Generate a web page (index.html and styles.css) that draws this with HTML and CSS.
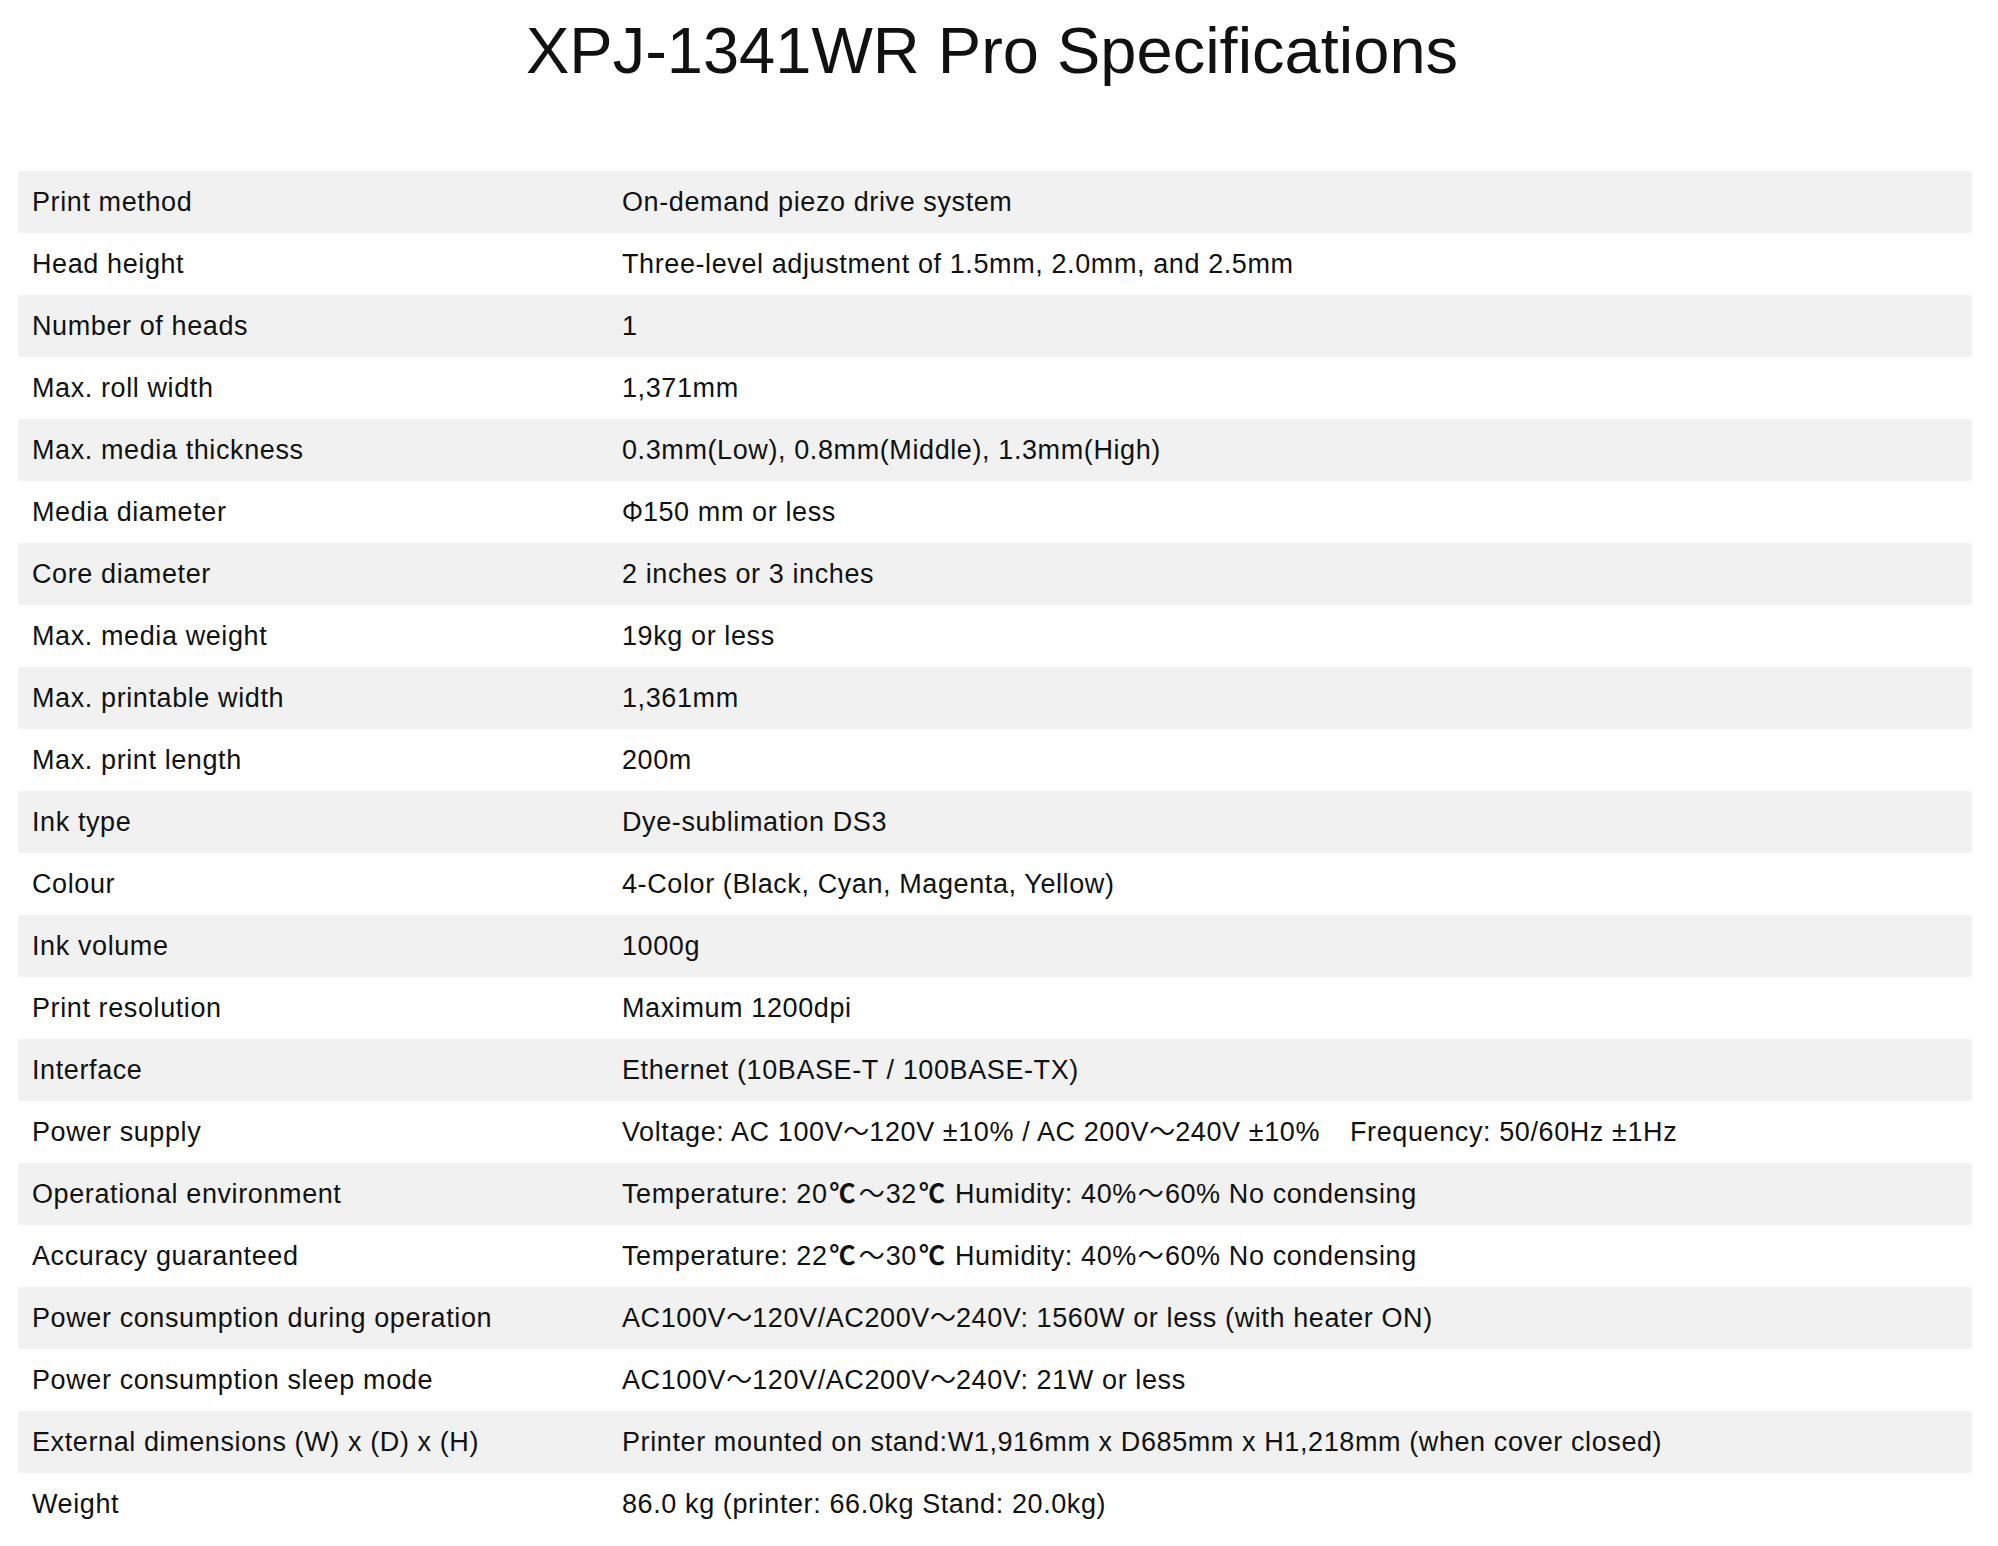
FILE: index.html
```html
<!DOCTYPE html>
<html lang="en">
<head>
<meta charset="utf-8">
<title>XPJ-1341WR Pro Specifications</title>
<link rel="stylesheet" href="styles.css">
</head>
<body>
<div class="page">
  <h1 class="title">XPJ-1341WR Pro Specifications</h1>
  <table class="spec">
    <tbody>
      <tr><td class="k">Print method</td><td class="v">On-demand piezo drive system</td></tr>
      <tr><td class="k">Head height</td><td class="v">Three-level adjustment of 1.5mm, 2.0mm, and 2.5mm</td></tr>
      <tr><td class="k">Number of heads</td><td class="v">1</td></tr>
      <tr><td class="k">Max. roll width</td><td class="v">1,371mm</td></tr>
      <tr><td class="k">Max. media thickness</td><td class="v">0.3mm(Low), 0.8mm(Middle), 1.3mm(High)</td></tr>
      <tr><td class="k">Media diameter</td><td class="v"><span class="cjk">Φ</span>150 mm or less</td></tr>
      <tr><td class="k">Core diameter</td><td class="v">2 inches or 3 inches</td></tr>
      <tr><td class="k">Max. media weight</td><td class="v">19kg or less</td></tr>
      <tr><td class="k">Max. printable width</td><td class="v">1,361mm</td></tr>
      <tr><td class="k">Max. print length</td><td class="v">200m</td></tr>
      <tr><td class="k">Ink type</td><td class="v">Dye-sublimation DS3</td></tr>
      <tr><td class="k">Colour</td><td class="v">4-Color (Black, Cyan, Magenta, Yellow)</td></tr>
      <tr><td class="k">Ink volume</td><td class="v">1000g</td></tr>
      <tr><td class="k">Print resolution</td><td class="v">Maximum 1200dpi</td></tr>
      <tr><td class="k">Interface</td><td class="v">Ethernet (10BASE-T / 100BASE-TX)</td></tr>
      <tr><td class="k">Power supply</td><td class="v">Voltage: AC 100V<span class="cjk">～</span>120V ±10% / AC 200V<span class="cjk">～</span>240V ±10%<span class="gap"></span>Frequency: 50/60Hz ±1Hz</td></tr>
      <tr><td class="k">Operational environment</td><td class="v">Temperature: 20<span class="cjk deg">℃</span><span class="cjk tl">～</span>32<span class="cjk deg">℃</span> Humidity: 40%<span class="cjk tl">～</span>60% No condensing</td></tr>
      <tr><td class="k">Accuracy guaranteed</td><td class="v">Temperature: 22<span class="cjk deg">℃</span><span class="cjk tl">～</span>30<span class="cjk deg">℃</span> Humidity: 40%<span class="cjk tl">～</span>60% No condensing</td></tr>
      <tr><td class="k">Power consumption during operation</td><td class="v">AC100V<span class="cjk">～</span>120V/AC200V<span class="cjk">～</span>240V: 1560W or less (with heater ON)</td></tr>
      <tr><td class="k">Power consumption sleep mode</td><td class="v">AC100V<span class="cjk">～</span>120V/AC200V<span class="cjk">～</span>240V: 21W or less</td></tr>
      <tr><td class="k">External dimensions (W) x (D) x (H)</td><td class="v">Printer mounted on stand:W1,916mm x D685mm x H1,218mm (when cover closed)</td></tr>
      <tr><td class="k">Weight</td><td class="v">86.0 kg (printer: 66.0kg Stand: 20.0kg)</td></tr>
    </tbody>
  </table>
</div>
</body>
</html>
```
FILE: styles.css
```css
html, body {
  margin: 0;
  padding: 0;
  background: #ffffff;
}

body {
  font-family: "Liberation Sans", Arial, "Noto Sans CJK JP", sans-serif;
  color: #111111;
}

.page {
  width: 1984px;
  padding-bottom: 11px;
}

.title {
  margin: 12px 0 0 0;
  font-size: 65px;
  line-height: 78px;
  font-weight: 400;
  text-align: center;
  color: #111111;
}

.spec {
  margin: 81px 0 0 18px;
  width: 1954px;
  border-collapse: collapse;
  border-spacing: 0;
  table-layout: fixed;
}

.spec tr:nth-child(odd) {
  background: #f1f1f1;
}

.spec td {
  height: 62px;
  padding: 0 14px;
  font-size: 27px;
  line-height: 62px;
  letter-spacing: 0.6px;
  white-space: nowrap;
  vertical-align: middle;
}

.spec .k {
  width: 562px;
}

.cjk {
  font-family: "Noto Sans CJK JP", sans-serif;
  font-size: 26px;
  line-height: 1;
  letter-spacing: 0;
}

.deg {
  font-weight: 700;
  margin: 0 2px;
}

.tl {
  margin: 0 1px;
}

.gap {
  display: inline-block;
  width: 30px;
}
```
